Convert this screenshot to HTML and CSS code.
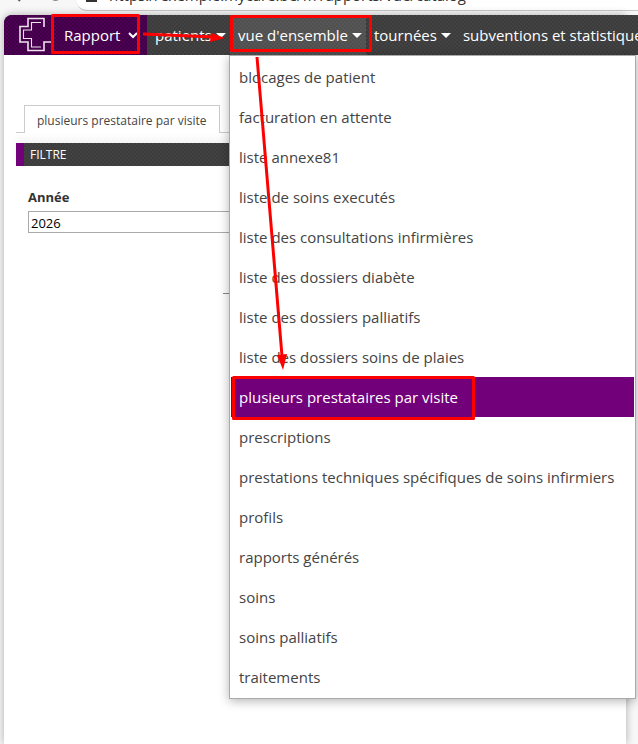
FILE: index.html
```html
<!DOCTYPE html>
<html lang="fr">
<head>
    <meta charset="UTF-8">
    <meta name="viewport" content="width=device-width, initial-scale=1.0">
    <title>Rapport</title>
    <link rel="stylesheet" href="styles.css">
</head>
<body>
    <header class="browser-bar">
        <svg class="nav-icons" width="76" height="11" viewBox="0 0 76 11" fill="none" stroke="#5f5f5f" stroke-width="2">
            <path d="M20 1L16 -3M51 -3a5 5 0 0 0 9 0"/>
        </svg>
        <div class="address">
            <svg class="lock" width="11" height="4" viewBox="0 0 11 4" fill="none" stroke="#333" stroke-width="2">
                <path d="M1 0V3H10V0"/>
            </svg>
            <span class="url">https://exemple.mycare.be/fr/rapports/vue/catalog</span>
        </div>
    </header>

    <div class="page">
        <nav class="menu-bar">
            <div class="brand">
                <svg class="logo" width="36" height="36" viewBox="0 0 36 36" fill="none" stroke="#eee3ee">
                    <path stroke-width="1.6" d="M27 10V1.500H11V9.500H3V25H11V33.500H27V25H35"/>
                    <path stroke-width="1.100" d="M24 5.500H14.500V13H6.500V21.500H14.500V30H24"/>
                </svg>
                <button class="section-button" type="button">Rapport
                    <svg width="10" height="7" viewBox="0 0 10 7" fill="none" stroke="#fff" stroke-width="2">
                        <path d="M1 1L5 5L9 1"/>
                    </svg>
                </button>
            </div>
            <a class="menu-link patients" href="#">patients<span class="caret"></span></a>
            <div class="menu-group">
                <a class="menu-link active" href="#">vue d'ensemble<span class="caret"></span></a>
                <ul class="dropdown">
                    <li><a href="#">blocages de patient</a></li>
                    <li><a href="#">facturation en attente</a></li>
                    <li><a href="#">liste annexe81</a></li>
                    <li><a href="#">liste de soins executés</a></li>
                    <li><a href="#">liste des consultations infirmières</a></li>
                    <li><a href="#">liste des dossiers diabète</a></li>
                    <li><a href="#">liste des dossiers palliatifs</a></li>
                    <li><a href="#">liste des dossiers soins de plaies</a></li>
                    <li><a class="selected" href="#">plusieurs prestataires par visite</a></li>
                    <li><a href="#">prescriptions</a></li>
                    <li><a href="#">prestations techniques spécifiques de soins infirmiers</a></li>
                    <li><a href="#">profils</a></li>
                    <li><a href="#">rapports générés</a></li>
                    <li><a href="#">soins</a></li>
                    <li><a href="#">soins palliatifs</a></li>
                    <li><a href="#">traitements</a></li>
                </ul>
            </div>
            <a class="menu-link" href="#">tournées<span class="caret"></span></a>
            <a class="menu-link" href="#">subventions et statistiques<span class="caret"></span></a>
        </nav>

        <main class="content">
            <div class="tabs">
                <a class="tab" href="#">plusieurs prestataire par visite</a>
            </div>
            <h2 class="filter-title">FILTRE</h2>
            <form class="filter-form">
                <label for="annee">Année</label>
                <input id="annee" type="text" value="2026">
                <hr class="form-end">
            </form>
        </main>
    </div>

    <!-- red boxes and arrows showing the path through the menu -->
    <svg class="marks" width="638" height="744" viewBox="0 0 638 744">
        <g fill="none" stroke="#f00" stroke-width="3" stroke-linejoin="round">
            <rect x="52.500" y="15.500" width="86" height="37"/>
            <rect x="231.500" y="16.500" width="139" height="34"/>
            <rect x="233.500" y="377.500" width="240" height="41"/>
            <path d="M143 34L214 37M257 57L282 356"/>
        </g>
        <path fill="#f00" d="M211 33L225 38L210 42ZM277 355L287 354L283 370Z"/>
    </svg>
</body>
</html>
```

FILE: styles.css
```css
* {
    box-sizing: border-box;
}

body {
    margin: 0;
    min-height: 100vh;
    display: flex;
    flex-direction: column;
    background-color: #f7f7f7;
    color: #444;
    font-family: "Open Sans", "Noto Sans", sans-serif;
    font-size: 15px;
    overflow: hidden;
}

a {
    color: inherit;
    text-decoration: none;
}

/* Bottom edge of the browser toolbar */
.browser-bar {
    display: flex;
    height: 15px;
    padding-bottom: 4px;
    overflow: hidden;
}

.nav-icons {
    flex: none;
}

.address {
    flex: 1;
    display: flex;
    align-items: flex-end;
    gap: 12px;
    height: 11px;
    margin-right: -20px;
    padding: 0 10px 6px;
    border-bottom: 1px solid #c8c8c8;
    border-bottom-left-radius: 16px;
    background-color: #fff;
    white-space: nowrap;
}

.lock {
    margin-bottom: 2px;
}

.url {
    line-height: 18px;
    color: #333;
}

.page {
    flex: 1;
    margin: 0 12px 0 4px;
    border-top-left-radius: 8px;
    background-color: #fff;
    box-shadow: 0 0 8px rgba(0, 0, 0, 0.3);
}

.menu-bar {
    display: flex;
    height: 40px;
    margin-right: -12px;
    border-top-left-radius: 8px;
    background: repeating-conic-gradient(#3b3b3b 0 25%, #434343 0 50%) 0 0 / 4px 4px;
    color: #fff;
    white-space: nowrap;
}

.brand {
    display: flex;
    align-items: center;
    flex: none;
    width: 143px;
    padding-left: 13px;
    border-top-left-radius: 8px;
    background: repeating-conic-gradient(#400046 0 25%, #4d0055 0 50%) 0 0 / 4px 4px;
}

.section-button {
    display: flex;
    align-items: center;
    gap: 8px;
    padding: 0 0 0 11px;
    border: 0;
    background: none;
    color: #fff;
    font: inherit;
}

.menu-link {
    display: flex;
    align-items: center;
    gap: 4px;
    flex: none;
    height: 40px;
    padding: 0 4px 0 8px;
}

.patients {
    width: 83px;
}

.caret {
    border: 5px solid transparent;
    border-top-color: #fff;
    border-bottom: 0;
}

.menu-group {
    position: relative;
}

.active {
    width: 136px;
    background: repeating-conic-gradient(#4f4f4f 0 25%, #575757 0 50%) 0 0 / 4px 4px;
}

.dropdown {
    position: absolute;
    z-index: 1;
    top: 40px;
    left: -1px;
    width: 407px;
    margin: 0;
    padding: 1px;
    list-style: none;
    border: 1px solid #aaa;
    background-color: #fff;
    color: #444;
    box-shadow: 0 2px 10px rgba(0, 0, 0, 0.3);
}

.dropdown a {
    display: block;
    padding: 0 8px;
    line-height: 40px;
}

.dropdown .selected {
    background-color: #73007b;
    color: #fff;
}

.content {
    padding: 50px 12px 0;
    font-size: 13px;
}

.tabs {
    display: flex;
    height: 28px;
}

.tabs::before,
.tabs::after {
    content: "";
    width: 8px;
    border-bottom: 1px solid #ccc;
}

.tabs::after {
    flex: 1;
}

.tab {
    padding: 0 12px;
    border: 1px solid #ccc;
    border-bottom: 0;
    font-size: 12px;
    line-height: 30px;
}

.filter-title {
    margin: 10px 0 0;
    padding-left: 6px;
    border-left: 8px solid #73007b;
    background: repeating-conic-gradient(#3b3b3b 0 25%, #434343 0 50%) 0 0 / 4px 4px;
    box-shadow: 0 -4px 8px rgba(0, 0, 0, 0.05);
    color: #fff;
    font-size: 12px;
    font-weight: 400;
    line-height: 23px;
}

.filter-form {
    padding: 21px 12px;
}

.filter-form label {
    display: block;
    color: #333;
    font-weight: 700;
    line-height: 20px;
}

.filter-form input {
    width: 100%;
    height: 22px;
    margin-top: 4px;
    padding: 2px 2px 0;
    border: 1px solid #aaa;
    background-color: #fff;
    color: #000;
    font: inherit;
}

.form-end {
    margin: 60px 0 0 195px;
    border: 0;
    border-top: 1px solid #888;
}

.marks {
    position: absolute;
    z-index: 2;
    top: 0;
    left: 0;
    pointer-events: none;
}
```
